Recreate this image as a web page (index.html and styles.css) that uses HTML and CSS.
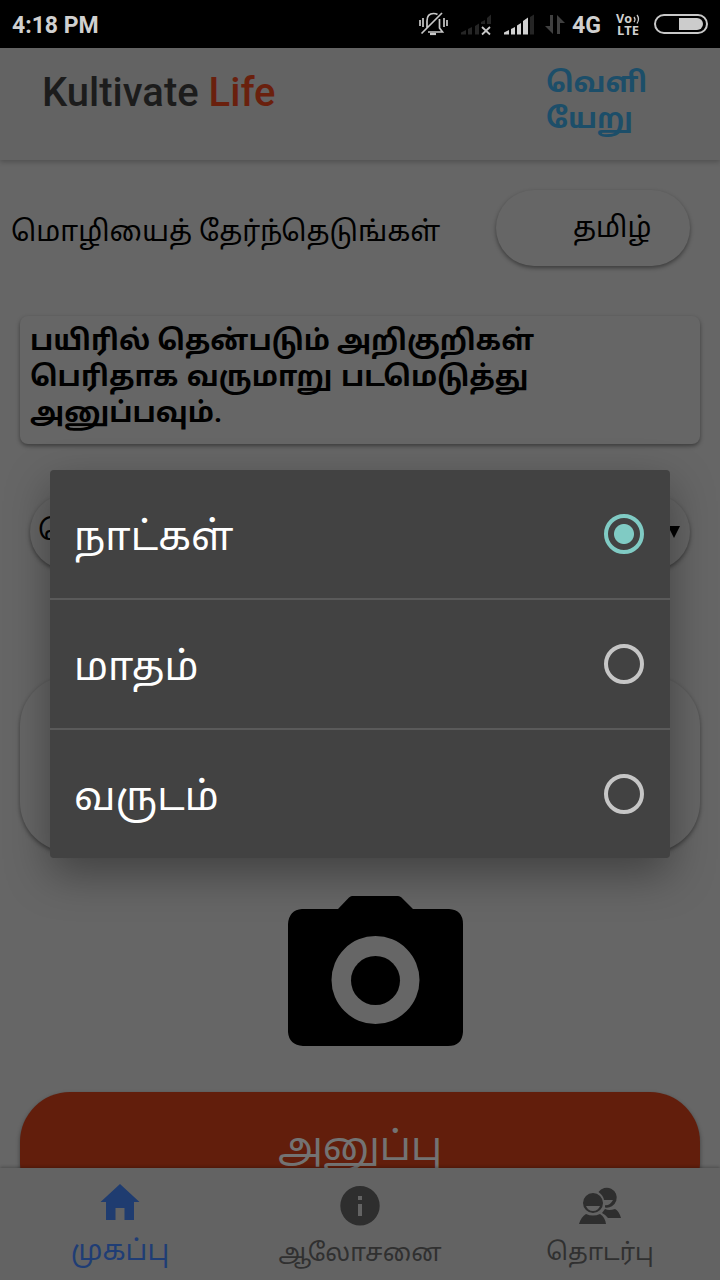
FILE: index.html
```html
<!DOCTYPE html>
<html lang="ta">
<head>
<meta charset="utf-8">
<title>Kultivate Life</title>
<link rel="stylesheet" href="styles.css">
</head>
<body>
<div class="screen">
  <div class="status">
    <span class="time">4:18 PM</span>
    <svg class="status-icons" width="310" height="48" viewBox="410 0 310 48">
      <g fill="none" stroke="#c8c8c8" stroke-width="1.7">
        <path d="M427 28V21q0-7.500 6.500-7.500q2.500 0 4 1M439.500 19v9l3 4H428M421.500 33.500l20.500-20.500"/>
        <path d="M430 34h6" stroke-width="2.200"/>
        <path d="M420 20v6M423 18v9M444 18v9M447 20v6"/>
      </g>
      <g fill="#252525"><path d="M461 34.500v-2l5-2.500v4.500zM468 29l4-2v7.500h-4zM475 26l4-2.500v11h-4zM481 22l4-2v4h-4zM487 18l4-3.500V24h-4zM530 17l4-2.500v20h-4z"/></g>
      <path d="M482 27l8 7.500M490 27l-8 7.500" stroke="#c8c8c8" stroke-width="1.800"/>
      <path fill="#d0d0d0" d="M504 34.500v-2l5-2.500v4.500zM511 29l4-2v7.500h-4zM517 25.500l4-2.500v11.500h-4zM523 21l5-3.500v17h-5z"/>
      <path fill="#404040" d="M550 15h3v19l-8-8h5zM557 34V15l8 8h-5v11z"/>
      <text class="net" x="572" y="33" textLength="29" lengthAdjust="spacingAndGlyphs">4G</text>
      <text class="volte" x="616" y="23" textLength="16" lengthAdjust="spacingAndGlyphs">Vo</text>
      <path d="M634 17q2 2.500 0 5M637 15q3 4 0 8.500" fill="none" stroke="#c8c8c8" stroke-width="1.300"/>
      <text class="volte" x="617" y="34.500" textLength="22" lengthAdjust="spacingAndGlyphs">LTE</text>
      <rect x="655" y="15" width="52" height="18" rx="9" fill="none" stroke="#c8c8c8" stroke-width="2"/>
      <path d="M679 18h18a6 6 0 0 1 0 12h-18z" fill="#ccc"/>
    </svg>
  </div>
  <header class="header">
    <h1 class="brand">Kultivate <span class="brand-accent">Life</span></h1>
    <a class="logout">வெளி<br>யேறு</a>
  </header>
  <main class="content">
    <div class="language">
      <span class="language-label">மொழியைத் தேர்ந்தெடுங்கள்</span>
      <div class="language-select">தமிழ்</div>
    </div>
    <div class="notice">பயிரில் தென்படும் அறிகுறிகள்<br><span class="notice-wide">பெரிதாக வருமாறு படமெடுத்து</span><br>அனுப்பவும்.</div>
    <div class="field"><span>தெ</span><i class="caret"></i></div>
    <div class="textarea"></div>
    <svg class="camera" width="175" height="150" viewBox="0 0 175 150">
      <path fill-rule="evenodd" d="M14 13H50L61 1.500Q62.500 0 64 0H110Q112 0 113.500 1.500L125 13H161Q175 14 175 28V136Q174 150 160 150H15Q1 149 0 136V28Q1 14 14 13ZM87.500 40a44 44 0 1 0 0 88a44 44 0 1 0 0-88Z"/>
      <circle cx="87.500" cy="84.500" r="24.500"/>
    </svg>
    <div class="submit">அனுப்பு</div>
  </main>
  <nav class="nav">
    <div class="tab tab-active">
      <svg width="48" height="44" viewBox="96 1180 48 44"><path d="M120 1184l19.500 18H134v18h-9.500v-12h-9v12H106v-18h-5.500z"/></svg>
      <span class="tab-label">முகப்பு</span>
    </div>
    <div class="tab">
      <svg width="48" height="44" viewBox="336 1180 48 44"><path fill-rule="evenodd" d="M360 1186a19.700 19.700 0 1 0 0 39.400a19.700 19.700 0 1 0 0-39.400zM358 1196h4v4h-4zM358 1204h4v12h-4z"/></svg>
      <span class="tab-label">ஆலோசனை</span>
    </div>
    <div class="tab">
      <svg width="48" height="44" viewBox="576 1180 48 44">
        <path fill-rule="evenodd" d="M598.500 1192a10 10 0 1 1 6.500 15.500v-2.200q5 .5 8-5.300h-9q-1-5-5.500-8zM602 1213l3-4q4 2 10 0q4 2 6 9h-13q-2-3-6-5z"/>
        <path fill-rule="evenodd" d="M593 1193a10 10 0 1 0 0 20a10 10 0 1 0 0-20zM586 1206h14q-2 5-7 5t-7-5zM579 1224q2-7 7-10q7 3 14 0q5 3 6 10z"/>
      </svg>
      <span class="tab-label tab-label-small">தொடர்பு</span>
    </div>
  </nav>
  <div class="dialog">
    <div class="option"><span class="option-text">நாட்கள்</span><i class="radio radio-on"></i></div>
    <div class="option"><span class="option-text">மாதம்</span><i class="radio"></i></div>
    <div class="option"><span class="option-text">வருடம்</span><i class="radio"></i></div>
  </div>
</div>
</body>
</html>
```
FILE: styles.css
```css
* { box-sizing: border-box; }
body { margin: 0; font-family: Roboto, "Noto Sans Tamil", "Noto Sans", sans-serif; }
.screen { position: relative; display: flex; flex-direction: column; width: 720px; height: 1280px; overflow: hidden; background: #666; color: #000; }
.status { display: flex; justify-content: space-between; align-items: center; height: 48px; padding-left: 12px; background: #000; color: #d0d0d0; flex: none; }
.time { font-size: 23px; font-weight: 700; line-height: 46px; padding-top: 4px; }
.net { font: 700 24px Roboto, sans-serif; fill: #d0d0d0; }
.volte { font: 700 12.5px "Open Sans", sans-serif; fill: #d0d0d0; }
.header { display: flex; justify-content: space-between; height: 112px; padding: 17px 74px 0 42px; background: #636363; box-shadow: 0 2px 5px rgba(0,0,0,.22); flex: none; }
.brand { margin: 0; font-size: 40px; font-weight: 500; line-height: 56px; color: #1c1c1c; }
.brand-accent { color: #6a200d; }
.logout { width: 100px; color: #1c4e69; font-size: 28px; font-weight: 700; line-height: 36px; white-space: nowrap; }
.content { display: flex; flex-direction: column; flex: 1; min-height: 0; overflow: hidden; padding: 30px 20px 0; }
.language { display: flex; justify-content: space-between; height: 76px; margin: 0 10px 0 -9px; }
.language-label { font-size: 28px; line-height: 83px; white-space: nowrap; }
.language-select { width: 194px; height: 76px; border-radius: 38px; padding-left: 77px; font-size: 28px; line-height: 75px; white-space: nowrap; box-shadow: 0 2px 4px rgba(0,0,0,.42); }
.notice { height: 128px; margin-top: 50px; padding: 7px 10px; border-radius: 8px; font-size: 28px; font-weight: 700; line-height: 36px; white-space: nowrap; box-shadow: 0 2px 4px rgba(0,0,0,.42); flex: none; }
.notice-wide { word-spacing: 1.5px; }
.field { display: flex; justify-content: space-between; align-items: center; height: 76px; margin: 50px 10px 0; padding: 0 10px 0 8px; border-radius: 38px; font-size: 28px; box-shadow: 0 2px 4px rgba(0,0,0,.42); flex: none; }
.caret { border: 6px solid transparent; border-top: 12px solid #000; border-bottom: 0; }
.textarea { height: 176px; margin-top: 106px; border-radius: 50px; box-shadow: 0 2px 4px rgba(0,0,0,.42); flex: none; }
.camera { margin: 44px 0 0 268px; flex: none; }
.submit { height: 120px; margin-top: 46px; border-radius: 50px; background: #621e0c; color: #737373; font-size: 40px; line-height: 109px; text-align: center; box-shadow: 0 2px 4px rgba(0,0,0,.4); flex: none; }
.nav { display: grid; grid-template-columns: repeat(3, 1fr); height: 112px; background: #636363; color: #303030; fill: #2e2e2e; box-shadow: 0 -1px 3px rgba(0,0,0,.25); flex: none; z-index: 1; }
.tab { display: flex; flex-direction: column; align-items: center; padding-top: 12px; }
.tab svg { overflow: visible; }
.tab-label { font-size: 24.6px; line-height: 57px; white-space: nowrap; }
.tab-label-small { font-size: 24px; }
.tab-active { color: #1f3d75; fill: #1f3c70; }
.tab-active .tab-label { font-size: 28px; line-height: 54px; }
.dialog { position: absolute; left: 50px; top: 470px; width: 620px; height: 388px; border-radius: 4px; background: #424242; box-shadow: 0 16px 44px rgba(0,0,0,.36); z-index: 2; }
.option { display: flex; justify-content: space-between; align-items: center; height: 130px; padding: 0 26px 0 24px; border-bottom: 2px solid #5a5a5a; color: #fff; font-size: 39.7px; white-space: nowrap; }
.option:last-child { height: 128px; border: 0; }
.option-text { padding-top: 10px; }
.radio { width: 40px; height: 40px; border: 4px solid #c6c6c6; border-radius: 50%; }
.radio-on { border-color: #80cbc4; background: radial-gradient(circle, #80cbc4 9.500px, transparent 10.500px); }
```
